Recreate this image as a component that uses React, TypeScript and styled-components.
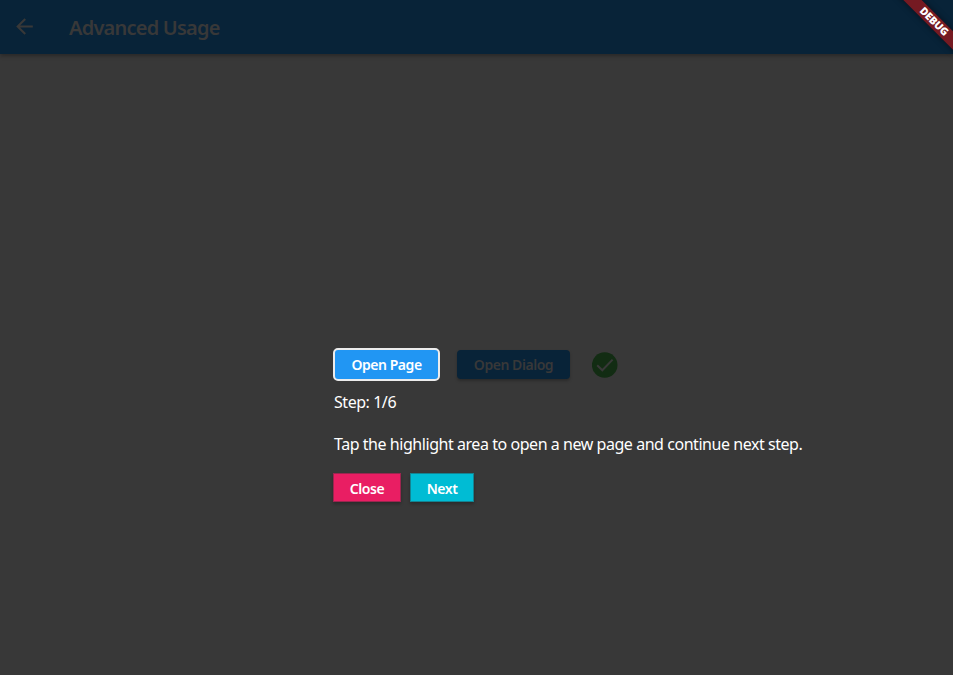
import React from "react";
import styled, { createGlobalStyle } from "styled-components";

const GlobalStyle = createGlobalStyle`
  * { box-sizing: border-box; }
  body { margin: 0; background: #383838; overflow: hidden; }
`;

const Screen = styled.div`
  position: relative;
  display: flex;
  flex-direction: column;
  width: 953px;
  height: 675px;
  overflow: hidden;
  background: #383838;
  font-family: "Noto Sans", "Open Sans", sans-serif;
`;

const AppBar = styled.header`
  display: flex;
  align-items: center;
  flex: none;
  height: 54px;
  padding-left: 13px;
  background: #082338;
  box-shadow: 0 2px 4px rgba(0, 0, 0, 0.3);
`;

const BackIcon = styled.svg`
  width: 25px;
  height: 25px;
  margin: -1px 1px 0 -1px;
  fill: #383838;
`;

const Title = styled.h1`
  margin: 2px 0 0 31px;
  color: #383838;
  font-size: 20px;
  font-weight: 600;
  line-height: 26px;
  letter-spacing: -0.78px;
  white-space: nowrap;
`;

const BannerCorner = styled.div`
  position: absolute;
  top: 0;
  right: 0;
  width: 80px;
  height: 80px;
  overflow: hidden;
`;

const Banner = styled.div`
  position: absolute;
  top: 15px;
  left: 1px;
  width: 120px;
  height: 13px;
  background: #751a22;
  box-shadow: 0 0 6px rgba(0, 0, 0, 0.5);
  transform: rotate(45deg);
  color: #fff;
  font-size: 10.5px;
  font-weight: 900;
  line-height: 13px;
  letter-spacing: -0.2px;
  text-align: center;
`;

const Content = styled.main`
  display: flex;
  flex-direction: column;
  align-items: flex-start;
  padding: 294px 0 0 333px;
`;

const Row = styled.div<{ $gap: number }>`
  display: flex;
  align-items: center;
  gap: ${(p) => p.$gap}px;
`;

const Button = styled.button<{ $width: number; $height: number; $bg: string; $color?: string; $border?: string; $radius?: number; $drop?: number }>`
  width: ${(p) => p.$width}px;
  height: ${(p) => p.$height}px;
  padding: ${(p) => p.$drop ?? 0}px 0 0;
  border: ${(p) => p.$border ?? "none"};
  border-radius: ${(p) => p.$radius ?? 0}px;
  background: ${(p) => p.$bg};
  color: ${(p) => p.$color ?? "#fff"};
  box-shadow: 0 2px 3px rgba(0, 0, 0, 0.25);
  font-family: inherit;
  font-size: 14px;
  font-weight: 600;
  line-height: 18px;
  letter-spacing: -0.45px;
  white-space: nowrap;
`;

const HighlightedButton = styled(Button)`
  border: 2px solid #ececec;
  box-shadow: none;
`;

const CheckIcon = styled.svg`
  width: 26px;
  height: 26px;
  margin: 1px 0 0 5px;
`;

const Message = styled.p<{ $top: number }>`
  margin: ${(p) => p.$top}px 0 0 1px;
  color: #fff;
  font-size: 16px;
  line-height: 22px;
  letter-spacing: -0.45px;
  white-space: nowrap;
`;

const Actions = styled(Row)`
  margin-top: 18px;
`;

export default function App() {
  return (
    <Screen>
      <GlobalStyle />
      <AppBar>
        <BackIcon viewBox="0 0 24 24">
          <path d="M20 11H7.83l5.59-5.59L12 4l-8 8 8 8 1.41-1.41L7.83 13H20v-2z" />
        </BackIcon>
        <Title>Advanced Usage</Title>
      </AppBar>
      <Content>
        <Row $gap={17}>
          <HighlightedButton $width={107} $height={33} $bg="#2196f3" $radius={5} $drop={1}>Open Page</HighlightedButton>
          <Button $width={113} $height={29} $bg="#082338" $color="#383838" $radius={4} $drop={1}>Open Dialog</Button>
          <CheckIcon viewBox="0 0 26 26">
            <circle cx="12.7" cy="13" r="12.8" fill="#122c13" />
            <path d="M5.2 13.2l5.1 5.1L20.6 7.6" fill="none" stroke="#383838" strokeWidth="2" />
          </CheckIcon>
        </Row>
        <Message $top={10}>Step: 1/6</Message>
        <Message $top={20}>Tap the highlight area to open a new page and continue next step.</Message>
        <Actions $gap={9}>
          <Button $width={68} $height={29} $bg="#e91e63" $border="1px solid #9a264f" $drop={2}>Close</Button>
          <Button $width={64} $height={29} $bg="#00bcd4" $border="1px solid #148391" $drop={2}>Next</Button>
        </Actions>
      </Content>
      <BannerCorner>
        <Banner>DEBUG</Banner>
      </BannerCorner>
    </Screen>
  );
}
